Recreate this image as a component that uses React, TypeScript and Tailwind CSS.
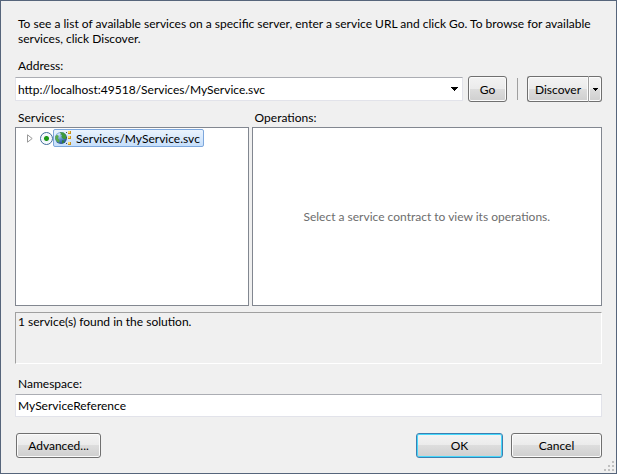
import { useState } from "react";
import type { ButtonHTMLAttributes } from "react";
import { clsx } from "clsx";

const PLAIN = "border-[#707070] shadow-[inset_0_0_0_1px_#fbfbfb]";
const PRIMARY = "border-[#3c7fb1] shadow-[inset_0_0_0_1px_#46d8fb]";
const FIELD = "border border-[#e2e3ea] border-t-[#abadb3] bg-white";

function DialogButton({ className, ...props }: ButtonHTMLAttributes<HTMLButtonElement>) {
  return (
    <button
      type="button"
      className={clsx(
        "rounded-[3px] border text-center leading-[15px]",
        "bg-[linear-gradient(#f3f3f3,#ebebeb_50%,#dddddd_50%,#cfcfcf)]",
        className,
      )}
      {...props}
    />
  );
}

function DownArrow({ className }: { className?: string }) {
  return (
    <svg className={className} viewBox="0 0 7 4" shapeRendering="crispEdges" aria-hidden="true">
      <path d="M0 0h7v1H6v1H5v1H4v1H3V3H2V2H1V1H0z" fill="#000" />
    </svg>
  );
}

function ServiceIcon() {
  return (
    <svg className="h-4 w-[18px] shrink-0" viewBox="0 0 18 16" aria-hidden="true">
      <defs>
        <radialGradient id="globe" cx="35%" cy="30%" r="75%">
          <stop offset="0" stopColor="#b5d3f2" />
          <stop offset="0.5" stopColor="#5187c8" />
          <stop offset="1" stopColor="#234a92" />
        </radialGradient>
      </defs>
      <circle cx="7" cy="8" r="6" fill="url(#globe)" />
      <path d="M6 2.2 9.5 2.5 12 5l.6 3-1.4 1.3L9 8.8 7.4 7 8 5 6.2 4z" fill="#3f9a3c" />
      <path d="M1.3 6.2 3.4 4.5l1.3 1.6L4 8.4l1.6 1.7-.5 2.6-2.2-1.1L1.3 9z" fill="#5aaa4c" />
      <path d="m8 10.2 2.6.3-.7 2.2-1.9.8z" fill="#2f7d38" />
      <path d="M3 4.6Q5 2.4 7 3.1L5.6 4.9 3.8 5.6z" fill="#dbeafa" opacity="0.8" />
      <path
        d="M12 2h1v1h-1zM12 7h1v1h-1zM12 13h1v1h-1z"
        fill="#4e4e50"
        shapeRendering="crispEdges"
      />
      <g fill="#c9921c" shapeRendering="crispEdges">
        <rect x="14" y="1" width="3" height="3" />
        <rect x="14" y="6" width="3" height="3" />
        <rect x="14" y="12" width="3" height="3" />
      </g>
      <g fill="#ffdf6b" shapeRendering="crispEdges">
        <rect x="14" y="1" width="2" height="2" />
        <rect x="14" y="6" width="2" height="2" />
        <rect x="14" y="12" width="2" height="2" />
      </g>
    </svg>
  );
}

function ServiceTree() {
  return (
    <div className="flex h-5 items-center pl-[11px]">
      <button type="button" aria-label="Expand" className="mr-[7px]">
        <svg className="h-[9px] w-[6px]" viewBox="0 0 6 9" aria-hidden="true">
          <path d="M.5.8v7.4l4.7-3.7z" fill="#fff" stroke="#989898" />
        </svg>
      </button>
      <input
        id="service"
        type="radio"
        name="service"
        defaultChecked
        className="size-[13px] shrink-0 appearance-none rounded-full border border-[#3f6c99] bg-[radial-gradient(circle,#17a012_0,#1c9416_2px,#eef5fb_3px,#ffffff_6px)]"
      />
      <label
        htmlFor="service"
        className="flex h-[18px] items-center rounded-[2px] border border-[#7da7dc] bg-linear-to-b from-[#eaf3fd] to-[#c6dffb] pr-[3px]"
      >
        <ServiceIcon />
        <span className="ml-1">Services/MyService.svc</span>
      </label>
    </div>
  );
}

function ResizeGrip() {
  const dots = [
    [8, 0],
    [4, 4],
    [8, 4],
    [0, 8],
    [4, 8],
    [8, 8],
  ];
  return (
    <svg
      className="absolute right-0.5 bottom-0.5 size-[10px]"
      viewBox="0 0 10 10"
      shapeRendering="crispEdges"
      aria-hidden="true"
    >
      {dots.map(([x, y]) => (
        <rect key={`${x}-${y}`} x={x} y={y} width="2" height="2" fill="#c0c0c0" />
      ))}
    </svg>
  );
}

export default function App() {
  const [address, setAddress] = useState("http://localhost:49518/Services/MyService.svc");
  const [namespace, setNamespace] = useState("MyServiceReference");

  return (
    <main className="relative flex min-h-screen flex-col border border-[#56657b] bg-[#f0f0f0] px-3.5 py-[15px] font-[Lato,'Open_Sans',sans-serif] text-[12px] leading-[15px] text-black">
      <p className="pl-[3px]">
        To see a list of available services on a specific server, enter a service URL and click Go. To browse for
        available services, click Discover.
      </p>

      <label htmlFor="address" className="mt-3 pl-[3px]">
        Address:
      </label>
      <div className="mt-[3px] flex items-center">
        <div className={clsx("flex h-6 min-w-0 flex-1 items-center", FIELD)}>
          <input
            id="address"
            className="min-w-0 flex-1 pl-0.5 outline-none"
            value={address}
            onChange={(e) => setAddress(e.target.value)}
          />
          <button type="button" aria-label="Recent addresses" className="px-1">
            <DownArrow className="h-1 w-[7px]" />
          </button>
        </div>
        <DialogButton className={clsx("ml-[5px] h-[26px] w-[39px]", PLAIN)}>Go</DialogButton>
        <div className="mr-[9px] ml-2.5 h-[22px] w-px bg-[#a0a0a0]" />
        <div className="flex">
          <DialogButton className={clsx("h-[26px] w-[62px] rounded-r-none border-r-[#a0a0a0]", PLAIN)}>
            Discover
          </DialogButton>
          <DialogButton
            aria-label="Discover options"
            className={clsx("flex h-[26px] w-[13px] items-center justify-center rounded-l-none border-l-0", PLAIN)}
          >
            <DownArrow className="h-[3px] w-[5px]" />
          </DialogButton>
        </div>
      </div>

      <div className="mt-2 grid flex-1 grid-cols-[2fr_3fr] gap-[3px]">
        <section className="flex flex-col">
          <h2 className="pl-[3px]">Services:</h2>
          <div className="mt-0.5 flex-1 border border-[#828790] bg-white">
            <ServiceTree />
          </div>
        </section>
        <section className="flex flex-col">
          <h2 className="pl-[3px]">Operations:</h2>
          <div className="mt-0.5 flex flex-1 items-center justify-center border border-[#828790] bg-white text-[#6d6d6d]">
            Select a service contract to view its operations.
          </div>
        </section>
      </div>

      <div
        role="status"
        className="mt-1.5 min-h-[52px] border border-t-[#a0a0a0] border-r-white border-b-white border-l-[#a0a0a0] px-0.5 py-px"
      >
        1 service(s) found in the solution.
      </div>

      <label htmlFor="namespace" className="mt-3 pl-[3px]">
        Namespace:
      </label>
      <input
        id="namespace"
        className={clsx("mt-[3px] h-[23px] pl-0.5 outline-none", FIELD)}
        value={namespace}
        onChange={(e) => setNamespace(e.target.value)}
      />

      <div className="mt-4 flex gap-2 pl-px">
        <DialogButton className={clsx("mr-auto h-[25px] w-[85px]", PLAIN)}>Advanced...</DialogButton>
        <DialogButton className={clsx("h-[25px] w-[87px]", PRIMARY)}>OK</DialogButton>
        <DialogButton className={clsx("h-[25px] w-[91px]", PLAIN)}>Cancel</DialogButton>
      </div>

      <ResizeGrip />
    </main>
  );
}
